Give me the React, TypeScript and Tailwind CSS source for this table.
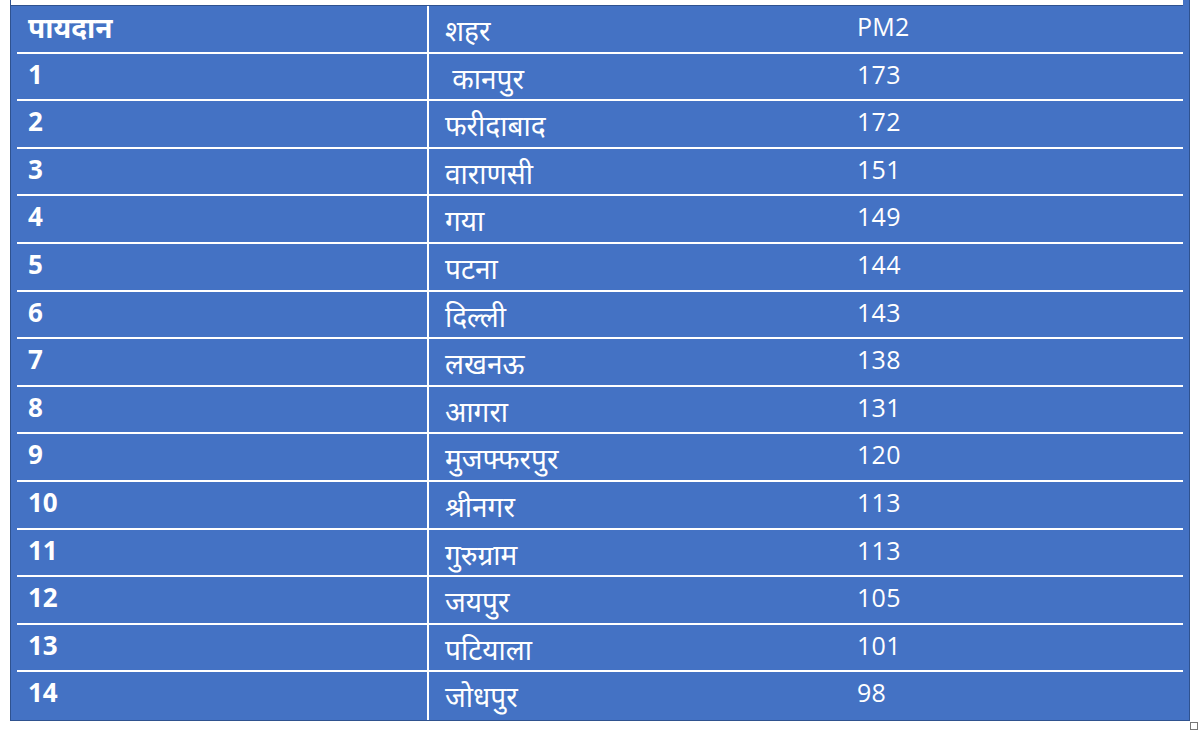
import React from "react";

const rows: [string, string, string][] = [
  ["1", " कानपुर", "173"],
  ["2", "फरीदाबाद", "172"],
  ["3", "वाराणसी", "151"],
  ["4", "गया", "149"],
  ["5", "पटना", "144"],
  ["6", "दिल्ली", "143"],
  ["7", "लखनऊ", "138"],
  ["8", "आगरा", "131"],
  ["9", "मुजफ्फरपुर", "120"],
  ["10", "श्रीनगर", "113"],
  ["11", "गुरुग्राम", "113"],
  ["12", "जयपुर", "105"],
  ["13", "पटियाला", "101"],
  ["14", "जोधपुर", "98"],
];

const font = { fontFamily: '"Open Sans", "Noto Sans", "Noto Sans Devanagari", sans-serif' };

function Row({ a, b, c, last, header }: { a: string; b: string; c: string; last?: boolean; header?: boolean }) {
  return (
    <div className="flex flex-col h-[47.6px]">
      <div className="flex flex-1 text-white">
        <div
          className={
            "w-[418px] border-r-2 border-white pl-[17px] font-bold " +
            (header ? "text-[28px] leading-[30px] pt-[6px]" : "text-[26px] leading-[30px] pt-[5px]")
          }
        >
          {a}
        </div>
        <div className="w-[412px] pl-[16px] pt-[7px] whitespace-pre text-[28px] leading-[34px]">{b}</div>
        <div className="flex-1 pl-[16px] pt-[5px] text-[25px] leading-[30px] tracking-[0.3px]">{c}</div>
      </div>
      {!last && <div className="mx-[6px] h-[2px] bg-white" />}
    </div>
  );
}

export default function App() {
  return (
    <div className="w-[1200px] h-[738px] bg-white relative overflow-hidden" style={font}>
      <div className="ml-[10px] w-[1180px] h-[721px] border border-[#2f528f] border-t-0 bg-[#4472c4] flex flex-col">
        <div className="h-[6px] bg-white mr-[6px] border-b border-[#2f528f]" />
        <Row a="पायदान" b="शहर" c="PM2" header />
        {rows.map((r, i) => (
          <Row key={i} a={r[0]} b={r[1]} c={r[2]} last={i === rows.length - 1} />
        ))}
      </div>
      <div className="absolute left-[1190px] top-[722px] w-[8px] h-[8px] border border-[#777] bg-white" />
    </div>
  );
}
